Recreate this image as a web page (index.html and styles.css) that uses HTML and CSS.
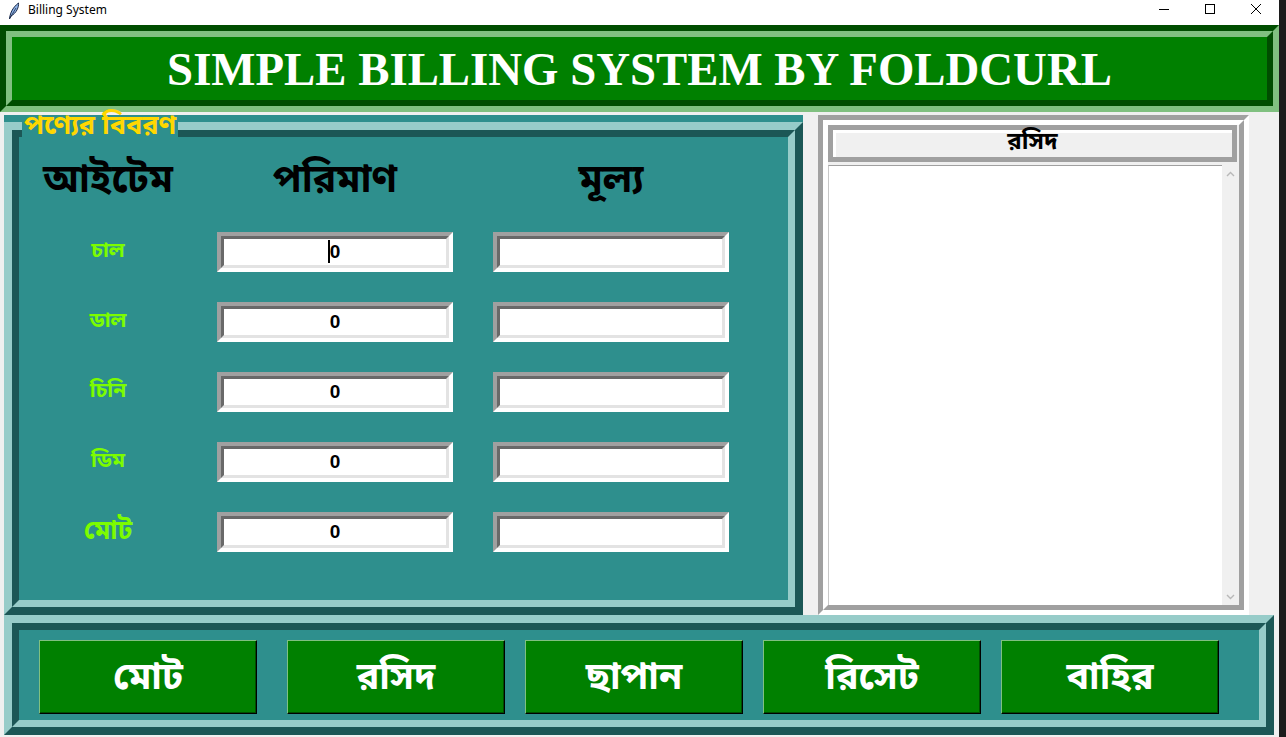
FILE: index.html
```html
<!DOCTYPE html>
<html lang="bn">
<head>
<meta charset="utf-8">
<title>Billing System</title>
<link rel="stylesheet" href="styles.css">
</head>
<body>
<div class="screen">
  <div class="window">
    <div class="titlebar">
      <svg class="app-icon" width="12" height="18" viewBox="0 0 12 18">
        <path d="M1.5 17 C2 12 4 6 10.5 1 C11 5 8.5 11 3 14 L1.5 17 Z" fill="#8fb4e8" stroke="#1b2a4a" stroke-width="1"/>
        <path d="M2 16 L8 6" stroke="#1b2a4a" stroke-width="0.8" fill="none"/>
      </svg>
      <span class="title">Billing System</span>
      <div class="controls">
        <span class="ctl"><svg width="12" height="12" viewBox="0 0 12 12"><path d="M1 6.5 H11" stroke="#000" stroke-width="1"/></svg></span>
        <span class="ctl"><svg width="12" height="12" viewBox="0 0 12 12"><rect x="1.5" y="1.5" width="9" height="9" fill="none" stroke="#000" stroke-width="1"/></svg></span>
        <span class="ctl"><svg width="12" height="12" viewBox="0 0 12 12"><path d="M1 1 L11 11 M11 1 L1 11" stroke="#000" stroke-width="1"/></svg></span>
      </div>
    </div>

    <div class="client">
      <header class="header">
        <div class="header-in">
          <h1>SIMPLE BILLING SYSTEM BY FOLDCURL</h1>
        </div>
      </header>

      <div class="main">
        <section class="items">
          <span class="legend">পণ্যের বিবরণ</span>
          <div class="ridge">
            <div class="ridge-in">
              <div class="grid">
                <div class="colhead">আইটেম</div>
                <div class="colhead">পরিমাণ</div>
                <div class="colhead">মূল্য</div>

                <div class="item">চাল</div>
                <div class="entry"><div class="entry-in"><span class="val caret">0</span></div></div>
                <div class="entry"><div class="entry-in"></div></div>

                <div class="item">ডাল</div>
                <div class="entry"><div class="entry-in"><span class="val">0</span></div></div>
                <div class="entry"><div class="entry-in"></div></div>

                <div class="item">চিনি</div>
                <div class="entry"><div class="entry-in"><span class="val">0</span></div></div>
                <div class="entry"><div class="entry-in"></div></div>

                <div class="item">ডিম</div>
                <div class="entry"><div class="entry-in"><span class="val">0</span></div></div>
                <div class="entry"><div class="entry-in"></div></div>

                <div class="item total">মোট</div>
                <div class="entry"><div class="entry-in"><span class="val">0</span></div></div>
                <div class="entry"><div class="entry-in"></div></div>
              </div>
            </div>
          </div>
        </section>

        <section class="receipt">
          <div class="groove">
            <div class="groove-in">
              <div class="receipt-title">রসিদ</div>
              <div class="receipt-body">
                <div class="textarea"></div>
                <div class="scroll">
                  <svg width="9" height="6" viewBox="0 0 9 6"><path d="M1 5 L4.5 1.5 L8 5" fill="none" stroke="#b8b8b8" stroke-width="1.4"/></svg>
                  <svg width="9" height="6" viewBox="0 0 9 6"><path d="M1 1 L4.5 4.5 L8 1" fill="none" stroke="#b8b8b8" stroke-width="1.4"/></svg>
                </div>
              </div>
            </div>
          </div>
        </section>
      </div>

      <section class="actions">
        <div class="ridge">
          <div class="ridge-in">
            <div class="buttons">
              <button class="btn first">মোট</button>
              <button class="btn">রসিদ</button>
              <button class="btn">ছাপান</button>
              <button class="btn">রিসেট</button>
              <button class="btn">বাহির</button>
            </div>
          </div>
        </div>
      </section>
    </div>
  </div>
  <div class="desktop-edge"></div>
</div>
</body>
</html>
```

FILE: styles.css
```css
:root {
  --bn: "Noto Sans Bengali", "Noto Serif Bengali", "Lohit Bengali", "Mukti", "FreeSans", "Noto Sans", sans-serif;
  --teal: #2e8f8d;
  --teal-l: #97ccc9;
  --teal-d: #1c5756;
  --green: #008000;
  --green-l: #80c080;
  --green-d: #004d00;
  --gray: #a0a0a0;
}

* { box-sizing: border-box; }

html, body {
  margin: 0;
  padding: 0;
}

body {
  width: 1286px;
  height: 737px;
  overflow: hidden;
  background: #f0f0f0;
  font-family: var(--bn);
}

.screen {
  display: flex;
  width: 1286px;
  height: 737px;
}

.window {
  width: 1279px;
  height: 737px;
  display: flex;
  flex-direction: column;
  background: #f0f0f0;
}

.desktop-edge {
  width: 7px;
  background: #1c1c1c;
}

/* title bar */
.titlebar {
  height: 25px;
  background: #fff;
  display: flex;
  align-items: flex-start;
  font-family: "Noto Sans", "Open Sans", sans-serif;
  font-size: 12px;
  color: #000;
}

.app-icon {
  margin: 2px 0 0 8px;
}

.title {
  margin-left: 8px;
  line-height: 19px;
}

.controls {
  margin-left: auto;
  display: flex;
}

.ctl {
  width: 46px;
  height: 25px;
  display: flex;
  justify-content: center;
  padding-top: 3px;
}

/* client area */
.client {
  height: 712px;
  display: flex;
  flex-direction: column;
}

.header {
  height: 87px;
  border: 6px solid;
  border-color: var(--green-d) var(--green-l) var(--green-l) var(--green-d);
}

.header-in {
  height: 100%;
  border: 6px solid;
  border-color: var(--green-l) var(--green-d) var(--green-d) var(--green-l);
  background: var(--green);
  display: flex;
  align-items: center;
  justify-content: center;
}

.header h1 {
  margin: 0;
  font-family: "Liberation Serif", "Times New Roman", serif;
  font-weight: bold;
  font-size: 46.8px;
  line-height: 1;
  color: #fff;
  padding-top: 2px;
}

.main {
  height: 503px;
  display: flex;
  padding: 3px 0 0 4px;
}

/* ridge boxes (teal) */
.ridge {
  border: 8px solid;
  border-color: var(--teal-l) var(--teal-d) var(--teal-d) var(--teal-l);
  height: 100%;
}

.ridge-in {
  border: 7px solid;
  border-color: var(--teal-d) var(--teal-l) var(--teal-l) var(--teal-d);
  background: var(--teal);
  height: 100%;
}

.items {
  position: relative;
  width: 799px;
  height: 500px;
  background: var(--teal);
  padding-top: 7px;
}

.legend {
  position: absolute;
  left: 18px;
  top: 1px;
  padding: 0 2px;
  background: var(--teal);
  color: #ffd700;
  font-weight: bold;
  font-size: 27px;
  line-height: 22px;
  height: 22px;
}

.grid {
  display: grid;
  grid-template-columns: 138px 236px 236px;
  grid-template-rows: 48px repeat(5, 40px);
  column-gap: 40px;
  row-gap: 30px;
  padding: 17px 0 0 20px;
}

.colhead {
  display: flex;
  align-items: center;
  justify-content: center;
  padding-top: 8px;
  font-weight: bold;
  font-size: 39px;
  line-height: 44px;
  color: #000;
}

.item {
  display: flex;
  align-items: center;
  justify-content: center;
  font-weight: bold;
  font-size: 21px;
  color: #7cfc00;
}

.item.total {
  font-size: 26px;
}

.entry {
  border: 4px solid;
  border-color: var(--gray) #fff #fff var(--gray);
  background: #fff;
}

.entry-in {
  height: 100%;
  border: 3px solid;
  border-color: #696969 #e3e3e3 #e3e3e3 #696969;
  background: #fff;
  display: flex;
  justify-content: center;
  align-items: center;
}

.val {
  position: relative;
  font-family: "Liberation Sans", Arial, sans-serif;
  font-weight: bold;
  font-size: 19px;
  line-height: 26px;
  color: #000;
}

.caret::before {
  content: "";
  position: absolute;
  left: -2px;
  top: 1px;
  width: 2px;
  height: 23px;
  background: #000;
}

/* receipt panel */
.receipt {
  margin-left: 15px;
  width: 431px;
  height: 500px;
}

.groove {
  height: 100%;
  border: 5px solid;
  border-color: var(--gray) #fff #fff var(--gray);
}

.groove-in {
  height: 100%;
  border: 5px solid;
  border-color: #fff var(--gray) var(--gray) #fff;
  display: flex;
  flex-direction: column;
}

.receipt-title {
  height: 37px;
  margin-right: 2px;
  border: 5px solid var(--gray);
  box-shadow: inset 3px 3px 0 #fff;
  background: #f0f0f0;
  display: flex;
  align-items: center;
  justify-content: center;
  font-weight: bold;
  font-size: 24px;
  line-height: 27px;
  color: #000;
}

.receipt-body {
  flex: 1;
  display: flex;
  margin-top: 3px;
}

.textarea {
  flex: 1;
  background: #fff;
  border-top: 1px solid var(--gray);
  border-left: 1px solid #c8c8c8;
}

.scroll {
  width: 17px;
  background: #f0f0f0;
  display: flex;
  flex-direction: column;
  justify-content: space-between;
  align-items: center;
  padding: 6px 0 5px;
}

/* action bar */
.actions {
  margin-left: 4px;
  width: 1270px;
  height: 120px;
}

.buttons {
  display: flex;
  gap: 20px;
  padding: 10px 0 0 20px;
}

.btn {
  width: 218px;
  height: 74px;
  padding: 5px 0 0;
  background: var(--green);
  border: 1px solid;
  border-color: var(--green-l) #000 #000 var(--green-l);
  box-shadow: inset -1px -1px 0 var(--green-d);
  color: #fff;
  font-family: var(--bn);
  font-weight: bold;
  font-size: 37.5px;
  line-height: 1;
}

.btn.first {
  margin-right: 10px;
}
```
